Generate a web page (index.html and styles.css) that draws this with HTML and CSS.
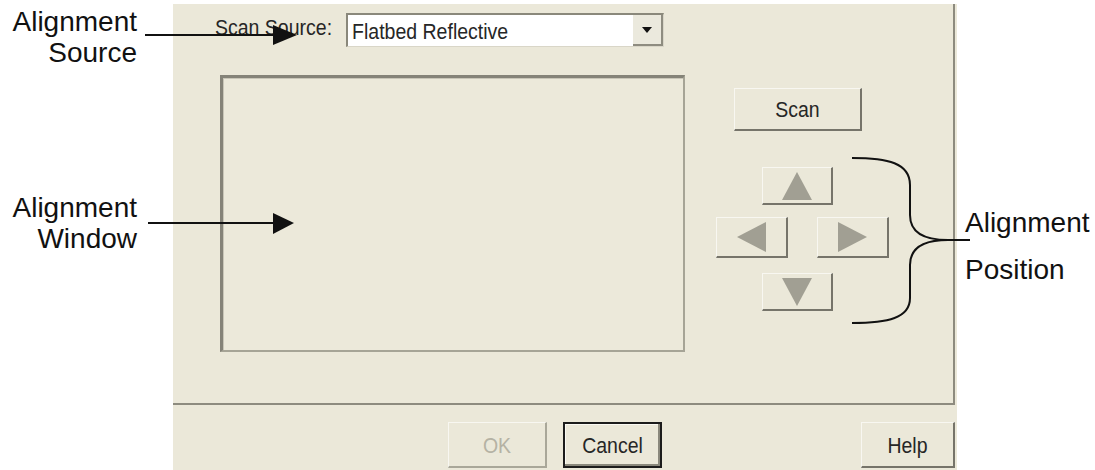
FILE: index.html
```html
<!DOCTYPE html>
<html lang="en">
<head>
<meta charset="utf-8">
<title>Alignment dialog</title>
<link rel="stylesheet" href="styles.css">
</head>
<body>
<div class="page">
  <div class="notes-left">
    <p class="note note-source">Alignment<br>Source</p>
    <p class="note note-window">Alignment<br>Window</p>
  </div>

  <div class="dialog">
    <div class="tabpage">
      <div class="source-row">
        <span class="lbl source-label">Scan Source:</span>
        <div class="select">
          <span class="lbl select-text">Flatbed Reflective</span>
          <span class="drop-btn"><span class="caret"></span></span>
        </div>
      </div>
      <div class="main-row">
        <div class="align-window"></div>
        <div class="controls">
          <button class="btn scan" type="button"><span class="lbl">Scan</span></button>
          <div class="pad">
            <div class="pad-row pad-single">
              <button class="btn arrow vert" type="button" aria-label="Up">
                <svg width="30" height="28" viewBox="0 0 30 28"><polygon points="15,0 30,28 0,28"/></svg>
              </button>
            </div>
            <div class="pad-row pad-pair">
              <button class="btn arrow horiz" type="button" aria-label="Left">
                <svg width="29" height="30" viewBox="0 0 29 30"><polygon points="0,15 29,0 29,30"/></svg>
              </button>
              <button class="btn arrow horiz" type="button" aria-label="Right">
                <svg width="29" height="30" viewBox="0 0 29 30"><polygon points="0,0 29,15 0,30"/></svg>
              </button>
            </div>
            <div class="pad-row pad-single pad-last">
              <button class="btn arrow vert" type="button" aria-label="Down">
                <svg width="30" height="28" viewBox="0 0 30 28"><polygon points="0,0 30,0 15,28"/></svg>
              </button>
            </div>
          </div>
        </div>
      </div>
    </div>
    <div class="footer">
      <button class="btn ok" type="button" disabled><span class="lbl">OK</span></button>
      <button class="btn cancel" type="button"><span class="lbl">Cancel</span></button>
      <button class="btn help" type="button"><span class="lbl">Help</span></button>
    </div>
  </div>

  <div class="notes-right">
    <p class="note note-position">Alignment<br>Position</p>
  </div>

  <svg class="annotations" width="1095" height="470" viewBox="0 0 1095 470">
    <line x1="145" y1="35" x2="276" y2="35" class="ann-line"/>
    <polygon points="273,25 297,35 273,45" class="ann-head"/>
    <line x1="148" y1="223" x2="276" y2="223" class="ann-line"/>
    <polygon points="273,213 294,223 273,234" class="ann-head"/>
    <path class="ann-line" d="M852,158 C888,158 910,163 910,185 L910,215 C910,232 924,240 948,240 C924,240 910,248 910,265 L910,298 C910,318 888,323 852,323"/>
    <line x1="944" y1="240" x2="970" y2="240" class="ann-line"/>
  </svg>
</div>
</body>
</html>
```

FILE: styles.css
```css
* { box-sizing: border-box; }

html, body {
  margin: 0;
  padding: 0;
  background: #ffffff;
}

.page {
  position: relative;
  width: 1095px;
  height: 470px;
  overflow: hidden;
  display: flex;
  font-family: "Liberation Sans", Arial, sans-serif;
}

/* ---------- annotation labels ---------- */
.note {
  margin: 0;
  font-size: 28px;
  color: #111;
}

.notes-left {
  width: 173px;
  flex: none;
  text-align: right;
  padding-right: 36px;
}

.notes-left .note { line-height: 31px; }
.note-source { margin-top: 6px; }
.note-window { margin-top: 124px !important; }

.notes-right {
  flex: 1;
  padding-left: 8px;
}

.note-position {
  line-height: 47px;
  margin-top: 199px;
}

/* ---------- dialog ---------- */
.dialog {
  width: 784px;
  flex: none;
  margin-top: 4px;
  background: #ebe8d9;
  display: flex;
  flex-direction: column;
  color: #262626;
  font-size: 19.5px;
}

.lbl {
  display: inline-block;
  line-height: 20px;
  transform: scaleY(1.15);
}

.tabpage {
  width: calc(100% - 2px);
  height: 401px;
  border-right: 2px solid #8d8b7f;
  border-bottom: 2px solid #8d8b7f;
}

.source-row {
  display: flex;
  align-items: flex-start;
  padding: 9px 0 0 42px;
  height: 43px;
}

.source-label {
  margin-top: 4px;
  margin-right: 14px;
}

.select {
  width: 318px;
  height: 34px;
  background: #ffffff;
  border-style: solid;
  border-width: 2px 1px 1px 2px;
  border-color: #8a887b #d9d6c8 #d9d6c8 #8a887b;
  display: flex;
  align-items: center;
  padding-left: 4px;
}

.select-text { flex: 1; }

.drop-btn {
  width: 30px;
  height: 100%;
  background: #ebe9dd;
  border-right: 2px solid #8e8c80;
  border-bottom: 2px solid #8e8c80;
  display: flex;
  align-items: center;
  justify-content: center;
}

.caret {
  width: 0;
  height: 0;
  border-left: 5px solid transparent;
  border-right: 5px solid transparent;
  border-top: 6px solid #111;
}

.main-row {
  display: flex;
  align-items: flex-start;
  margin-top: 28px;
  padding-left: 47px;
}

.align-window {
  width: 465px;
  height: 277px;
  border-style: solid;
  border-width: 3px 2px 2px 3px;
  border-color: #858378 #a6a496 #a6a496 #858378;
  box-shadow: inset 1px 1px 0 #c9c6b8;
  background: #ece9da;
}

.controls {
  margin-left: 31px;
  width: 173px;
  display: flex;
  flex-direction: column;
  align-items: flex-start;
}

/* ---------- buttons ---------- */
.btn {
  font: inherit;
  color: inherit;
  margin: 0;
  padding: 0;
  background: #ebe8d9;
  border-style: solid;
  border-width: 1px 2px 2px 1px;
  border-color: #f8f7f1 #76746a #76746a #f8f7f1;
  display: flex;
  align-items: center;
  justify-content: center;
}

.scan {
  width: 128px;
  height: 43px;
  margin-top: 13px;
  margin-left: 18px;
}

.pad {
  margin-top: 36px;
  width: 173px;
  display: flex;
  flex-direction: column;
}

.pad-row { display: flex; }
.pad-single { padding-left: 46px; }
.pad-pair {
  margin-top: 12px;
  gap: 29px;
}
.pad-last { margin-top: 15px; }

.arrow svg { display: block; fill: #a19f93; }
.vert { width: 71px; height: 38px; }
.horiz { width: 72px; height: 41px; }

/* ---------- footer ---------- */
.footer {
  flex: 1;
  display: flex;
  align-items: flex-start;
  padding-top: 17px;
}

.footer .btn { height: 46px; }

.ok {
  width: 99px;
  margin-left: 275px;
  color: #b5b2a4;
  border-color: #f8f7f1 #a9a799 #a9a799 #f8f7f1;
}

.cancel {
  width: 99px;
  margin-left: 16px;
  border: 2px solid #1c1c1c;
  box-shadow: inset -2px -2px 0 #8a887c, inset 1px 1px 0 #faf9f3;
}

.help {
  width: 94px;
  margin-left: auto;
  margin-right: 2px;
}

/* ---------- overlay annotations ---------- */
.annotations {
  position: absolute;
  left: 0;
  top: 0;
  pointer-events: none;
}

.ann-line {
  stroke: #111;
  stroke-width: 2;
  fill: none;
}

.ann-head { fill: #111; }
```
